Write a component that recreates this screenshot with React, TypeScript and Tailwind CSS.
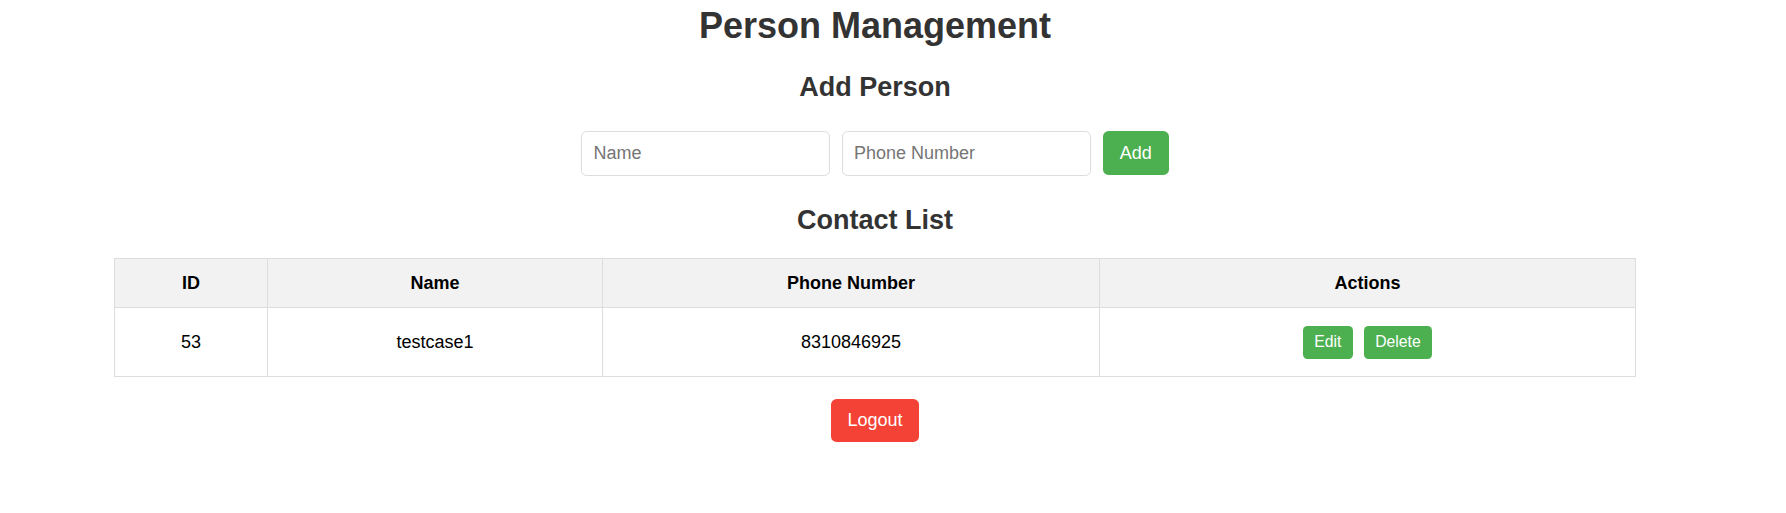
import React, { useState } from 'react';

type Person = { id: number; name: string; phone: string };

const App = () => {
  const [name, setName] = useState('');
  const [phone, setPhone] = useState('');
  const [people] = useState<Person[]>([{ id: 53, name: 'testcase1', phone: '8310846925' }]);

  return (
    <div className="w-[1750px] flex flex-col items-center bg-white font-['Liberation_Sans',Arial,sans-serif]">
      {/* Title */}
      <h1 className="mt-[4.5px] text-[36px] leading-[41.4px] font-bold text-[#333]">Person Management</h1>

      {/* Add form */}
      <h2 className="mt-[25.7px] text-[27px] leading-[31px] font-bold text-[#333]">Add Person</h2>
      <div className="mt-[28px] flex items-center gap-[11.5px]">
        <input
          value={name}
          onChange={(e) => setName(e.target.value)}
          placeholder="Name"
          className="w-[249px] h-[45px] px-[11.25px] border border-[#dddddd] rounded-[5.6px] text-[18px] text-black placeholder:text-[#757575] outline-none"
        />
        <input
          value={phone}
          onChange={(e) => setPhone(e.target.value)}
          placeholder="Phone Number"
          className="w-[249.5px] h-[45px] px-[11.25px] border border-[#dddddd] rounded-[5.6px] text-[18px] text-black placeholder:text-[#757575] outline-none"
        />
        <button className="w-[66px] h-[43.7px] rounded-[5.6px] bg-[#4CAF50] text-white text-[18px]">Add</button>
      </div>

      {/* Contact list */}
      <h2 className="mt-[29.6px] text-[27px] leading-[31px] font-bold text-[#333]">Contact List</h2>
      <table className="mt-[22px] w-[1522px] table-fixed border-collapse text-[18px] text-black">
        <thead>
          <tr className="bg-[#f2f2f2]">
            <th className="w-[153px] h-[49px] border border-[#dddddd] font-bold text-center">ID</th>
            <th className="w-[335px] h-[49px] border border-[#dddddd] font-bold text-center">Name</th>
            <th className="w-[497px] h-[49px] border border-[#dddddd] font-bold text-center">Phone Number</th>
            <th className="h-[49px] border border-[#dddddd] font-bold text-center">Actions</th>
          </tr>
        </thead>
        <tbody>
          {people.map((p) => (
            <tr key={p.id}>
              <td className="h-[69px] border border-[#dddddd] text-center">{p.id}</td>
              <td className="h-[69px] border border-[#dddddd] text-center">{p.name}</td>
              <td className="h-[69px] border border-[#dddddd] text-center">{p.phone}</td>
              <td className="h-[69px] border border-[#dddddd] text-center">
                <button className="mx-[5.6px] h-[33px] px-[11.25px] rounded-[4.5px] bg-[#4CAF50] text-white text-[15.75px] align-middle">Edit</button>
                <button className="mx-[5.6px] h-[33px] px-[11.25px] rounded-[4.5px] bg-[#4CAF50] text-white text-[15.75px] align-middle">Delete</button>
              </td>
            </tr>
          ))}
        </tbody>
      </table>

      <button className="mt-[21.5px] mb-[70px] w-[87.7px] h-[43.7px] rounded-[5.6px] bg-[#f44336] text-white text-[18px]">Logout</button>
    </div>
  );
};

export default App;
